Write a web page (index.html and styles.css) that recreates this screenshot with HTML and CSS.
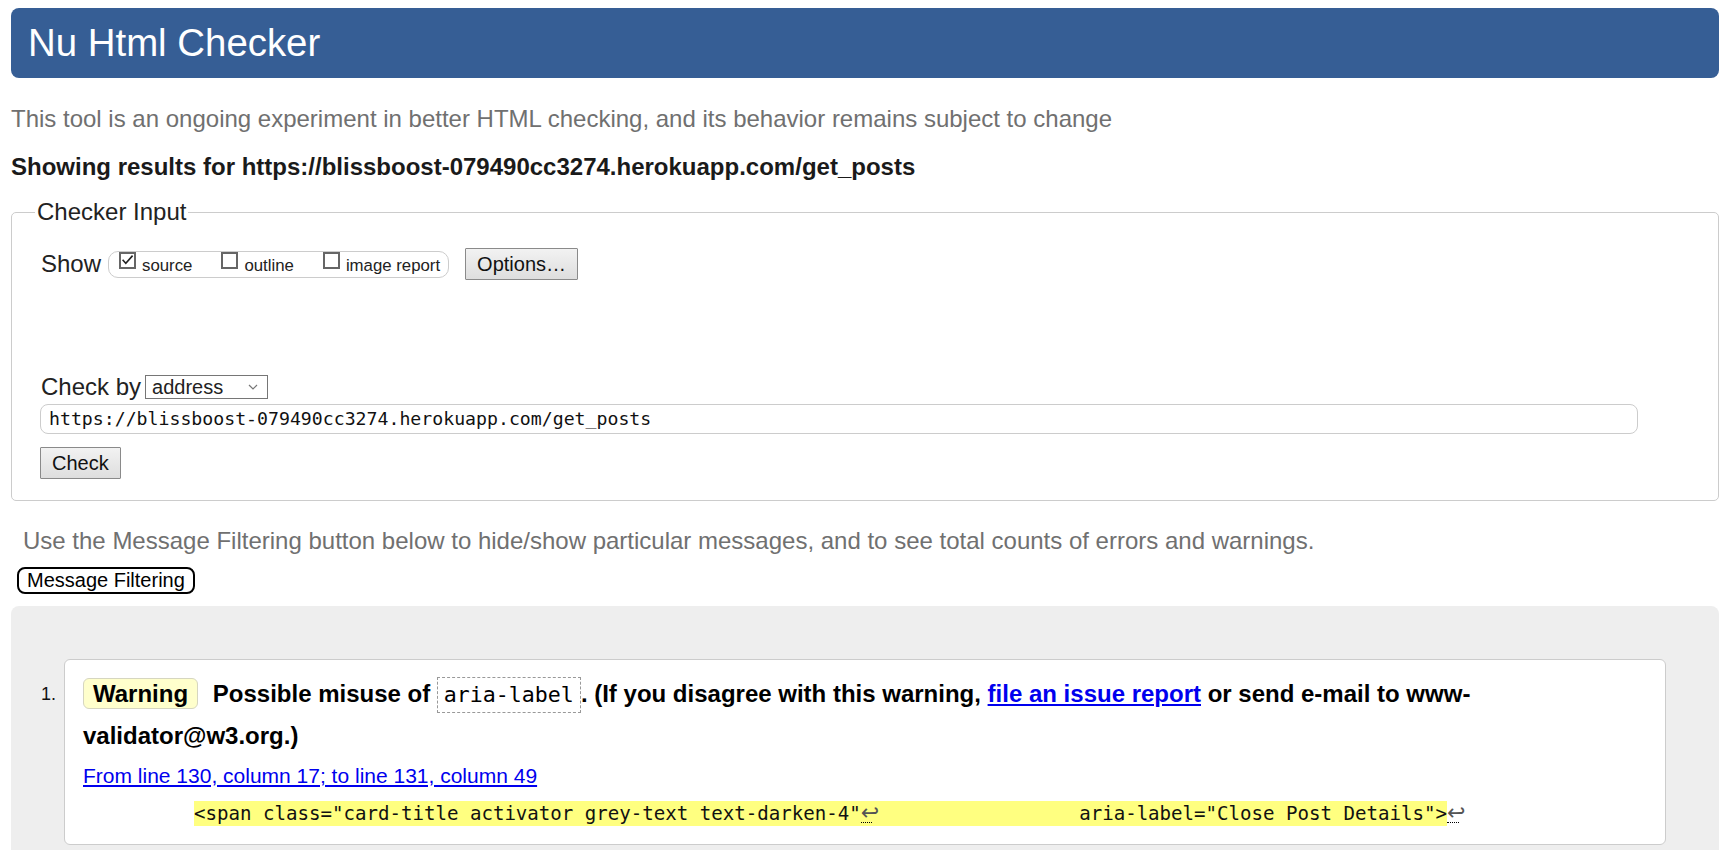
FILE: index.html
```html
<!DOCTYPE html>
<html lang="en">
<head>
<meta charset="utf-8">
<title>Nu Html Checker</title>
<link rel="stylesheet" href="styles.css">
</head>
<body>
<div class="page">
  <header class="masthead"><h1>Nu Html Checker</h1></header>
  <p class="intro">This tool is an ongoing experiment in better HTML checking, and its behavior remains subject to change</p>
  <p class="results-for">Showing results for https://blissboost-079490cc3274.herokuapp.com/get_posts</p>
  <form class="input-form">
    <fieldset class="checker">
      <legend>Checker Input</legend>
      <div class="show-row">
        <span class="show-label">Show</span>
        <span class="show-group">
          <span class="opt"><span class="box"><svg width="13" height="13" viewBox="0 0 13 13"><path d="M1.6 5.8 L4.8 9.4 L11.6 1.6" fill="none" stroke="#222" stroke-width="1.6"/></svg></span><span class="opt-text">source</span></span>
          <span class="opt"><span class="box"></span><span class="opt-text">outline</span></span>
          <span class="opt"><span class="box"></span><span class="opt-text">image report</span></span>
        </span>
        <button type="button" class="btn options">Options…</button>
      </div>
      <div class="checkby-row">
        <span class="checkby-label">Check by</span>
        <span class="select"><span class="select-text">address</span><svg class="chev" width="10" height="6" viewBox="0 0 10 6"><path d="M1 1 L5 5 L9 1" fill="none" stroke="#777" stroke-width="1.2"/></svg></span>
      </div>
      <div class="url">https://blissboost-079490cc3274.herokuapp.com/get_posts</div>
      <button type="button" class="btn check">Check</button>
    </fieldset>
  </form>
  <p class="filter-hint">Use the Message Filtering button below to hide/show particular messages, and to see total counts of errors and warnings.</p>
  <button type="button" class="filter-btn">Message Filtering</button>
  <section class="results">
    <ol class="messages">
      <li class="msg">
        <span class="num">1.</span>
        <div class="card">
          <p class="heading"><strong class="badge">Warning</strong> <span>Possible misuse of <code class="kw">aria-label</code>. (If you disagree with this warning, <a href="#">file an issue report</a> or send e-mail to www-validator@w3.org.)</span></p>
          <p class="location"><a href="#">From line 130, column 17; to line 131, column 49</a></p>
          <p class="extract"><code><b>&lt;span class="card-title activator grey-text text-darken-4"<span class="lf">↩</span>                  aria-label="Close Post Details"&gt;</b><span class="lf">↩</span></code></p>
        </div>
      </li>
    </ol>
  </section>
</div>
</body>
</html>
```
FILE: styles.css
```css
* { box-sizing: border-box; }
html, body { margin: 0; overflow: hidden; }
body {
  font-family: "Liberation Sans", Arial, sans-serif;
  font-size: 24px;
  color: #222;
  background: #fff;
}
.page { padding: 8px 13px 0 11px; }

.masthead {
  height: 70px;
  background: #365e95;
  border-radius: 8px;
  display: flex;
  align-items: center;
  padding-left: 17px;
}
.masthead h1 {
  margin: 0;
  font-size: 38.4px;
  font-weight: normal;
  color: #fff;
  line-height: 1;
}
.intro { margin: 27px 0 0; line-height: 28px; color: #707070; }
.results-for { margin: 20px 0 0; line-height: 28px; font-weight: bold; color: #1a1a1a; }

.input-form { margin: 17px 0 0; }
.checker {
  margin: 0;
  border: 1px solid #ccc;
  border-radius: 5px;
  padding: 22px 0 21px 29px;
}
.checker legend { padding: 0 2px; margin-left: -6px; line-height: 28px; }

.show-row { display: flex; align-items: center; height: 32px; }
.show-group {
  display: flex;
  align-items: flex-start;
  height: 27px;
  margin-left: 7px;
  padding: 0 8px 0 10px;
  border: 1px solid #ccc;
  border-radius: 10px;
  font-size: 16.8px;
}
.opt { display: flex; align-items: flex-start; margin-right: 29px; }
.opt:last-child { margin-right: 0; }
.box {
  width: 17px;
  height: 17px;
  border: 2px solid #666;
  margin-right: 6px;
  display: flex;
  align-items: center;
  justify-content: center;
  background: #fff;
}
.opt-text { padding-top: 4px; line-height: 19px; }

.btn {
  font-family: "Liberation Sans", Arial, sans-serif;
  font-size: 20px;
  color: #111;
  height: 32px;
  padding: 0 11px;
  border: 1px solid #8a8a8a;
  border-radius: 1px;
  background: linear-gradient(#f2f2f2, #dedede);
}
.options { margin-left: 16px; }
.check { display: block; margin-top: 13px; margin-left: -1px; }

.checkby-row { display: flex; align-items: center; height: 28px; margin-top: 93px; }
.select {
  display: flex;
  align-items: center;
  justify-content: space-between;
  width: 123px;
  height: 24px;
  margin-left: 4px;
  padding: 0 9px 0 6px;
  border: 1px solid #767676;
  font-size: 20px;
  background: #fff;
}
.url {
  margin-top: 3px;
  margin-left: -1px;
  width: 1598px;
  height: 30px;
  border: 1px solid #ccc;
  border-radius: 8px;
  padding-left: 8px;
  font-family: "DejaVu Sans Mono", "Liberation Mono", monospace;
  font-size: 18.2px;
  line-height: 28px;
  color: #111;
}

.filter-hint { margin: 26px 0 0 12px; line-height: 28px; color: #707070; }
.filter-btn {
  display: block;
  margin: 12px 0 0 6px;
  height: 27px;
  padding: 0 8px;
  border: 2px solid #000;
  border-radius: 8px;
  background: #fff;
  font-family: "Liberation Sans", Arial, sans-serif;
  font-size: 20px;
  color: #000;
}

.results {
  margin-top: 12px;
  background: #eee;
  border-radius: 8px 8px 0 0;
  padding: 53px 53px 6px 0;
}
.messages { margin: 0; padding: 0; list-style: none; }
.msg { display: flex; }
.num {
  flex: 0 0 53px;
  padding: 24px 0 0 30px;
  font-size: 18px;
  line-height: 22px;
  color: #111;
}
.card {
  flex: 1;
  background: #fff;
  border: 1px solid #ccc;
  border-radius: 6px;
  padding: 13px 19px 18px 18px;
}
.heading { margin: 0; font-weight: bold; line-height: 42px; color: #000; }
.badge {
  display: inline-block;
  background: #ffffcc;
  border: 1px solid #d6d6c0;
  border-radius: 6px;
  padding: 0 9px;
  line-height: 29px;
  margin-right: 8px;
}
.kw {
  display: inline-block;
  font-family: "DejaVu Sans Mono", "Liberation Mono", monospace;
  font-size: 21.6px;
  font-weight: normal;
  border: 1px dashed #999;
  padding: 3px 6px;
  line-height: 28px;
}
a { color: #0000ee; }
.location { margin: 5px 0 0; line-height: 28px; font-size: 21px; }
.extract {
  margin: 12px 0 0 111px;
  font-family: "DejaVu Sans Mono", "Liberation Mono", monospace;
  font-size: 19.1px;
  line-height: 24px;
  white-space: pre;
  color: #111;
}
.extract code { font-family: inherit; }
.extract b { font-weight: normal; background: #ffff80; padding: 1px 0; }
.lf {
  display: inline-block;
  width: 11.5px;
  font-family: "DejaVu Sans", sans-serif;
  font-size: 22px;
  line-height: 18px;
  color: #555;
  border-bottom: 1px dotted #000;
}
```
